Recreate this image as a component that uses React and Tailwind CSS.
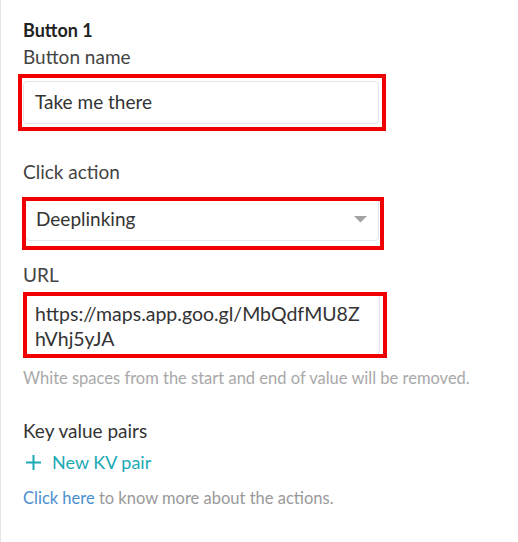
import React from 'react';

function RedMark({ className }) {
    // annotation rectangle drawn over the field
    return <div className={`absolute border-4 border-[#f00000] pointer-events-none ${className}`}></div>;
}

export default function App() {
    return (
        <div className="w-[518px] h-[542px] bg-white border-l border-[#e6e6e6] pl-[22px] pt-[20px] text-[#333] font-['Lato',sans-serif]">
            <div className="text-[18px] font-bold leading-[20px] text-[#222]">Button 1</div>
            <div className="mt-[6px] text-[19px] leading-[22px] text-[#444]">Button name</div>

            <div className="relative mt-[13px] w-[356px]">
                <div className="h-[43px] rounded-[4px] border border-[#e3e5ea] px-[11px] flex items-center text-[19px] text-[#333]">
                    Take me there
                </div>
                <RedMark className="left-[-5px] right-[-7px] top-[-7px] bottom-[-7px]" />
            </div>

            <div className="mt-[37px] text-[19px] leading-[22px] text-[#444]">Click action</div>

            <div className="relative mt-[14px] w-[354px] ml-[2px]">
                <div className="h-[44px] rounded-[4px] border border-[#e3e5ea] pl-[10px] pr-[10px] flex items-center justify-between text-[19px] text-[#333]">
                    <span>Deeplinking</span>
                    <svg width="13" height="7" viewBox="0 0 13 7" className="mr-[1px]">
                        <path d="M0 0 H13 L6.5 6.5 Z" fill="#a3a3a3" />
                    </svg>
                </div>
                <RedMark className="left-[-3px] right-[-5px] top-0 bottom-[-9px]" />
            </div>

            <div className="mt-[23px] text-[19px] leading-[22px] text-[#444]">URL</div>

            <div className="relative mt-[8px] w-[356px] ml-[1px]">
                <div className="h-[61px] rounded-[4px] border border-[#e3e5ea] pl-[10px] pr-[8px] pt-[6px] text-[19.5px] leading-[25px] text-[#333] whitespace-nowrap">
                    https://maps.app.goo.gl/MbQdfMU8Z<br />hVhj5yJA
                </div>
                <RedMark className="left-[-1px] right-[-7px] top-[-2px] bottom-[-3px]" />
            </div>

            <div className="mt-[14px] text-[16.5px] leading-[18px] text-[#a8a8a8]">
                White spaces from the start and end of value will be removed.
            </div>

            <div className="mt-[33px] text-[19px] leading-[22px] text-[#333]">Key value pairs</div>

            <div className="mt-[9px] flex items-center gap-[11px] text-[18px] leading-[22px] text-[#1aa9b5] ml-[3px]">
                <svg width="15" height="15" viewBox="0 0 15 15">
                    <path d="M7.5 0 V15 M0 7.5 H15" stroke="#1aa9b5" strokeWidth="2" />
                </svg>
                <span>New KV pair</span>
            </div>

            <div className="mt-[16px] text-[16.5px] leading-[18px] text-[#999]">
                <span className="text-[#4a8fcf]">Click here</span> to know more about the actions.
            </div>
        </div>
    );
}
